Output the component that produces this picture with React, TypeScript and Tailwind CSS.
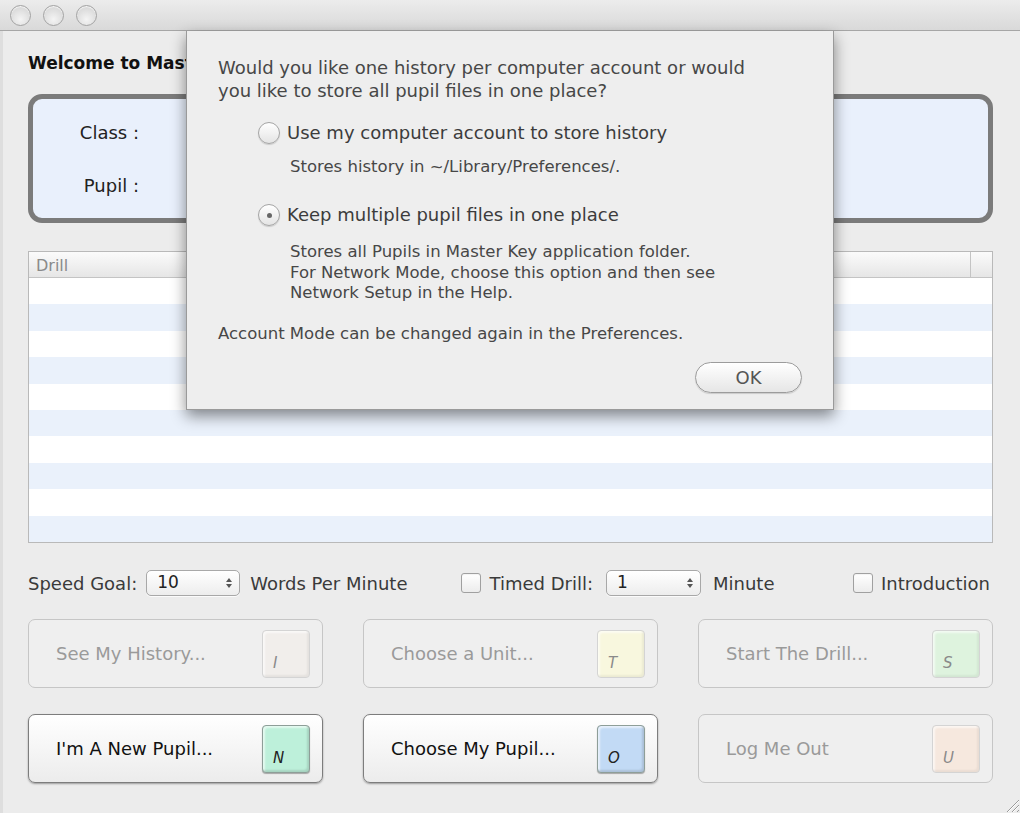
import React from "react";

const FONT = "font-['DejaVu_Sans',_'Liberation_Sans',_sans-serif]";

function TrafficLight() {
  return (
    <div className="h-[21px] w-[21px] rounded-full border border-[#a3a3a3] bg-[radial-gradient(circle_at_50%_70%,#f4f4f4,#cfcfcf)] shadow-[inset_0_1px_1px_rgba(255,255,255,0.8)]" />
  );
}

function Stepper({ value, width }: { value: string; width: string }) {
  return (
    <div
      className={`flex h-[26px] ${width} items-center justify-between rounded-[5px] border border-[#a8a8a8] bg-gradient-to-b from-[#ffffff] to-[#ededed] pl-[10px] pr-[6px] shadow-[0_1px_0_rgba(255,255,255,0.8)]`}
    >
      <span className="text-[17px] text-[#222]">{value}</span>
      <svg width="8" height="14" viewBox="0 0 8 14">
        <path d="M4 2 L7 6 H1 Z" fill="#555" />
        <path d="M4 12 L7 8 H1 Z" fill="#555" />
      </svg>
    </div>
  );
}

function Checkbox() {
  return (
    <div className="h-[20px] w-[20px] rounded-[3px] border border-[#a0a0a0] bg-gradient-to-b from-[#ffffff] to-[#ececec] shadow-[inset_0_1px_1px_rgba(0,0,0,0.05)]" />
  );
}

function Radio({ checked }: { checked?: boolean }) {
  return (
    <div className="flex h-[22px] w-[22px] items-center justify-center rounded-full border border-[#a5a5a5] bg-gradient-to-b from-[#ffffff] to-[#e4e4e4] shadow-[0_1px_1px_rgba(0,0,0,0.15)]">
      {checked && <div className="h-[5px] w-[5px] rounded-full bg-[#666]" />}
    </div>
  );
}

interface ActionButtonProps {
  label: string;
  keyLetter: string;
  keyColor: string;
  enabled?: boolean;
}

function ActionButton({ label, keyLetter, keyColor, enabled }: ActionButtonProps) {
  return (
    <div
      className={`flex h-[69px] items-center justify-between rounded-[7px] pl-[27px] pr-[12px] ${
        enabled
          ? "border border-[#7d7d7d] bg-gradient-to-b from-[#ffffff] to-[#ececec] shadow-[0_1px_2px_rgba(0,0,0,0.35)]"
          : "border border-[#c6c6c6] bg-[#efefef]"
      }`}
    >
      <span className={`text-[18px] ${enabled ? "text-[#111]" : "text-[#9a9a9a]"}`}>{label}</span>
      <div
        className={`flex h-[48px] w-[48px] items-end rounded-[4px] pb-[6px] pl-[10px] ${keyColor} ${
          enabled
            ? "border border-[#8e9e98] shadow-[inset_-2px_-2px_2px_rgba(0,0,0,0.12),inset_2px_2px_2px_rgba(255,255,255,0.6),0_1px_1px_rgba(0,0,0,0.3)]"
            : "border border-[#d4d4d4] shadow-[inset_-2px_-2px_2px_rgba(0,0,0,0.05),inset_2px_2px_2px_rgba(255,255,255,0.6)]"
        }`}
      >
        <span className={`text-[15px] italic leading-none ${enabled ? "text-[#222]" : "text-[#8a8a8a]"}`}>
          {keyLetter}
        </span>
      </div>
    </div>
  );
}

function AccountModeDialog() {
  return (
    <div className="absolute left-[186px] top-[31px] h-[379px] w-[648px] border-x border-b border-[#9a9a9a] bg-[#eeeeee] pl-[31px] pr-[20px] pt-[25px] text-[#474747] shadow-[0_6px_14px_rgba(0,0,0,0.45)]">
      <p className="text-[18px] leading-[23px]">
        Would you like one history per computer account or would
        <br />
        you like to store all pupil files in one place?
      </p>

      <div className="ml-[40px] mt-[20px] flex items-center gap-[7px]">
        <Radio />
        <span className="text-[18px] leading-[22px] text-[#3c3c3c]">Use my computer account to store history</span>
      </div>
      <p className="ml-[72px] mt-[13px] text-[16.5px] leading-[20px]">Stores history in ~/Library/Preferences/.</p>

      <div className="ml-[40px] mt-[27px] flex items-center gap-[7px]">
        <Radio checked />
        <span className="text-[18px] leading-[22px] text-[#3c3c3c]">Keep multiple pupil files in one place</span>
      </div>
      <p className="ml-[72px] mt-[16px] text-[16.5px] leading-[20.5px]">
        Stores all Pupils in Master Key application folder.
        <br />
        For Network Mode, choose this option and then see
        <br />
        Network Setup in the Help.
      </p>

      <p className="mt-[20px] text-[16.5px] leading-[20px]">Account Mode can be changed again in the Preferences.</p>

      <div className="mr-[11px] mt-[18px] flex justify-end">
        <div className="flex h-[31px] w-[107px] items-center justify-center rounded-full border border-[#9c9c9c] bg-gradient-to-b from-[#ffffff] to-[#e6e6e6] text-[18px] text-[#555] shadow-[0_1px_1px_rgba(0,0,0,0.15)]">
          OK
        </div>
      </div>
    </div>
  );
}

export default function App() {
  const rows = Array.from({ length: 10 }, (_, i) => i);

  return (
    <div className={`relative flex h-[813px] w-[1020px] flex-col overflow-hidden bg-[#ececec] ${FONT}`}>
      {/* title bar */}
      <div className="flex h-[31px] shrink-0 items-center gap-[12px] border-b border-[#a6a6a6] bg-gradient-to-b from-[#ececec] to-[#d9d9d9] pl-[10px]">
        <TrafficLight />
        <TrafficLight />
        <TrafficLight />
      </div>

      <div className="flex-1 border-l-[3px] border-[#dedede] pl-[25px] pr-[27px]">
        <p className="pt-[21px] text-[17px] font-bold leading-[22px] text-[#111]">
          Welcome to Master Key. Click "I'm A New Pupil" or "Choose My Pupil" to login.
        </p>

        {/* login box */}
        <div className="mt-[20px] flex h-[129px] flex-col gap-[31px] rounded-[14px] border-[5px] border-[#7b7b7b] bg-[#e9f0fc] pt-[23px]">
          <div className="w-[106px] text-right text-[18px] leading-[22px] text-[#222]">Class :</div>
          <div className="w-[106px] text-right text-[18px] leading-[22px] text-[#222]">Pupil :</div>
        </div>

        {/* drill table */}
        <div className="mt-[28px] flex h-[292px] flex-col border border-[#b9b9b9] bg-white">
          <div className="flex h-[26px] shrink-0 border-b border-[#c4c4c4] bg-gradient-to-b from-[#fbfbfb] to-[#e6e6e6]">
            <div className="flex-1 pl-[7px] text-[16px] leading-[27px] text-[#8a8a8a]">Drill</div>
            <div className="w-[22px] border-l border-[#c4c4c4]" />
          </div>
          <div className="flex flex-1 flex-col">
            {rows.map((r) => (
              <div key={r} className={`flex-1 ${r % 2 === 1 ? "bg-[#eaf1fb]" : "bg-white"}`} />
            ))}
          </div>
        </div>

        {/* options row */}
        <div className="mt-[27px] flex h-[26px] items-center text-[18px] text-[#3a3a3a]">
          <span>Speed Goal:</span>
          <div className="ml-[9px]">
            <Stepper value="10" width="w-[94px]" />
          </div>
          <span className="ml-[10px]">Words Per Minute</span>
          <div className="ml-[54px]">
            <Checkbox />
          </div>
          <span className="ml-[8px]">Timed Drill:</span>
          <div className="ml-[13px]">
            <Stepper value="1" width="w-[95px]" />
          </div>
          <span className="ml-[12px]">Minute</span>
          <div className="ml-auto mr-[3px] flex items-center gap-[8px]">
            <Checkbox />
            <span>Introduction</span>
          </div>
        </div>

        {/* action buttons */}
        <div className="mt-[23px] grid grid-cols-3 gap-x-[40px] gap-y-[26px]">
          <ActionButton label="See My History..." keyLetter="I" keyColor="bg-[#f1eeeb]" />
          <ActionButton label="Choose a Unit..." keyLetter="T" keyColor="bg-[#f8f7de]" />
          <ActionButton label="Start The Drill..." keyLetter="S" keyColor="bg-[#def3de]" />
          <ActionButton label="I'm A New Pupil..." keyLetter="N" keyColor="bg-[#bdf0da]" enabled />
          <ActionButton label="Choose My Pupil..." keyLetter="O" keyColor="bg-[#c2daf5]" enabled />
          <ActionButton label="Log Me Out" keyLetter="U" keyColor="bg-[#f6e8de]" />
        </div>
      </div>

      {/* resize grip */}
      <svg className="absolute bottom-0 right-0" width="18" height="18" viewBox="0 0 18 18">
        <path d="M17 5 L5 17 M17 10 L10 17 M17 15 L15 17" stroke="#9a9a9a" strokeWidth="1" />
        <path d="M17 6 L6 17 M17 11 L11 17" stroke="#ffffff" strokeWidth="1" />
      </svg>

      <AccountModeDialog />
    </div>
  );
}
